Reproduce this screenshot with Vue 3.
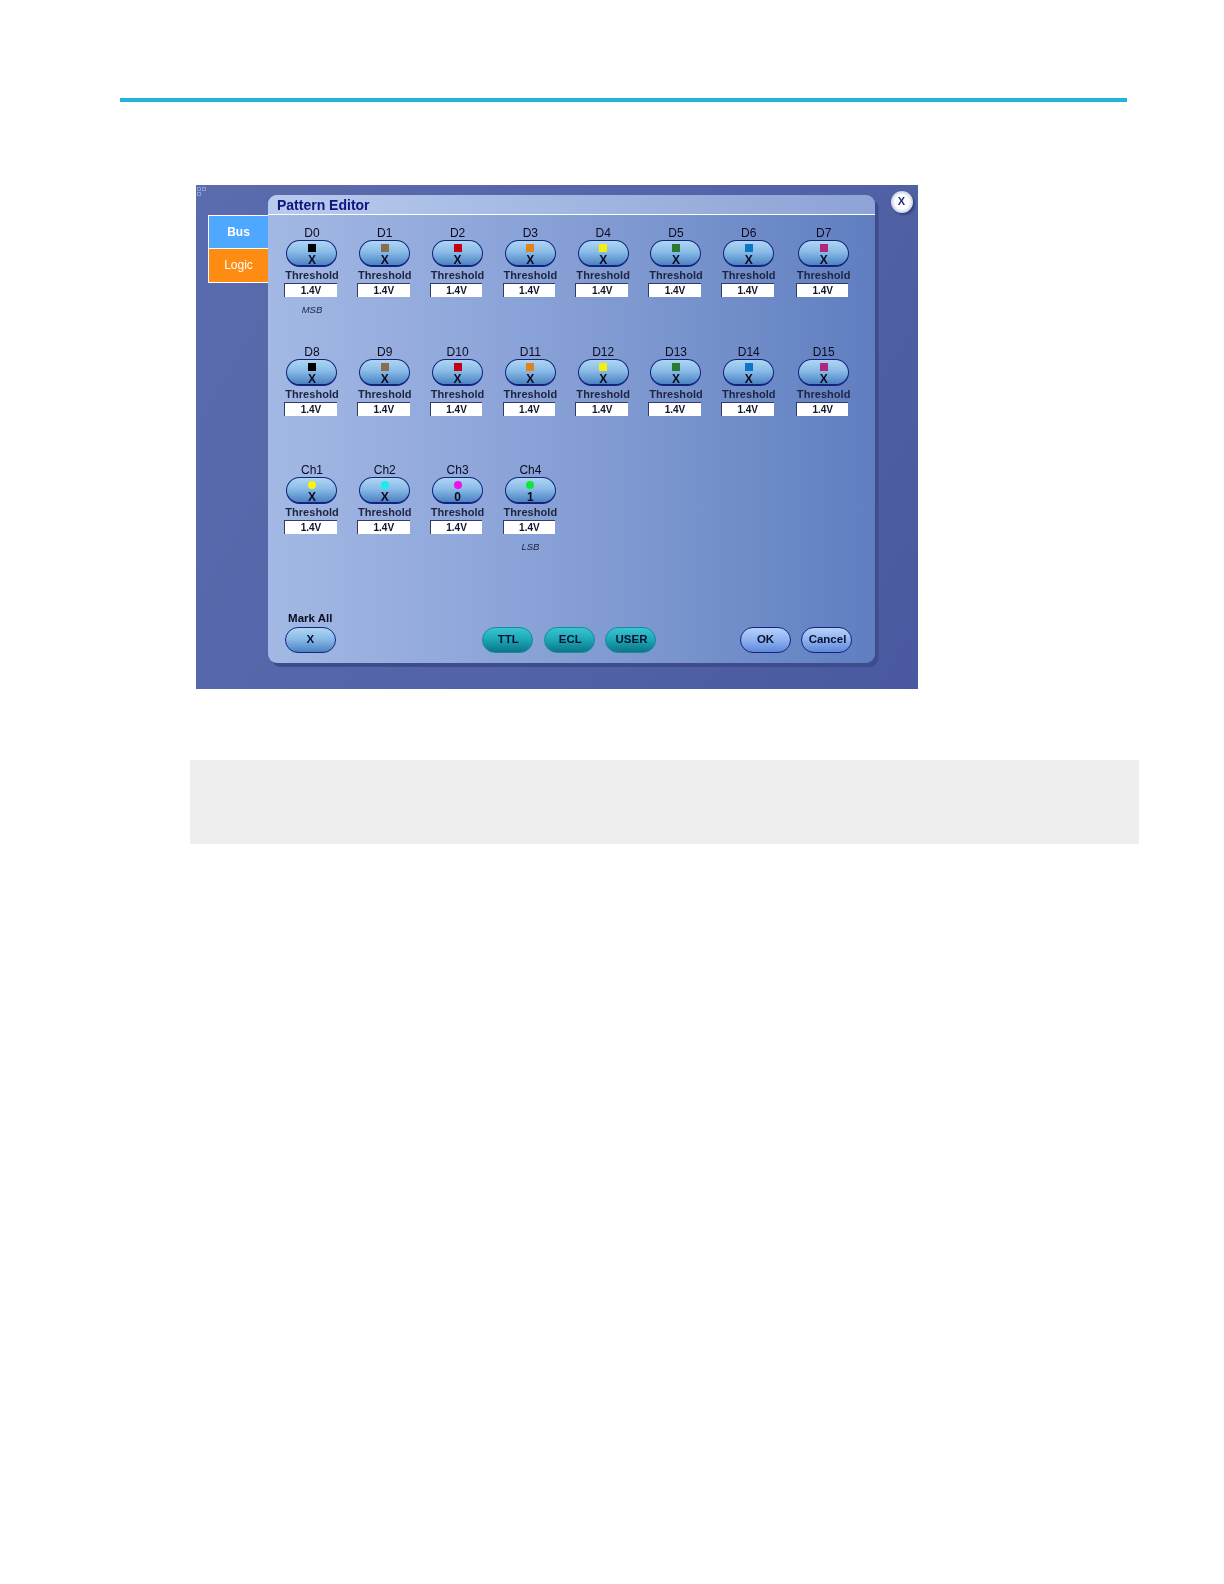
<script setup>
const colors = ['#000000', '#8a6d4a', '#c60012', '#e0821e', '#f5ee10', '#2a7a32', '#0a76c4', '#b0267a']
const digital = Array.from({ length: 16 }, (_, i) => ({
  name: 'D' + i,
  value: 'X',
  color: colors[i % 8],
  round: false,
  note: i === 0 ? 'MSB' : '',
}))
const analog = [
  { name: 'Ch1', value: 'X', color: '#f8f40a', round: true, note: '' },
  { name: 'Ch2', value: 'X', color: '#14f0f0', round: true, note: '' },
  { name: 'Ch3', value: '0', color: '#f010e8', round: true, note: '' },
  { name: 'Ch4', value: '1', color: '#10e838', round: true, note: 'LSB' },
]
const channels = [...digital, ...analog]
</script>

<template>
  <div class="page">
    <div class="rule"></div>
    <div class="shot">
      <div class="grip"><i></i><i></i><i></i></div>
      <div class="tabs">
        <div class="tab bus">Bus</div>
        <div class="tab logic">Logic</div>
      </div>
      <div class="dialog">
        <div class="title">Pattern Editor</div>
        <div class="grid">
          <div v-for="c in channels" :key="c.name" class="cell">
            <div class="name">{{ c.name }}</div>
            <div class="pill channel">
              <span class="mark" :class="{ round: c.round }" :style="{ background: c.color }"></span>
              <span class="val">{{ c.value }}</span>
            </div>
            <div class="thr">Threshold</div>
            <div class="box">1.4V</div>
            <div class="note">{{ c.note }}</div>
          </div>
        </div>
        <div class="footer">
          <div class="markall">
            <div class="ma-label">Mark All</div>
            <div class="btn blue wide">X</div>
          </div>
          <div class="btn teal ttl">TTL</div>
          <div class="btn teal ecl">ECL</div>
          <div class="btn teal user">USER</div>
          <div class="btn light ok">OK</div>
          <div class="btn light cancel">Cancel</div>
        </div>
      </div>
      <div class="close">X</div>
    </div>
    <div class="note-box"></div>
  </div>
</template>

<style>
html, body { margin: 0; background: #fff; }
</style>

<style scoped>
.page {
  width: 1224px;
  height: 1584px;
  background: #fff;
  display: flex;
  flex-direction: column;
  font-family: "Liberation Sans", Arial, sans-serif;
  overflow: hidden;
}
.rule {
  margin: 98px 0 0 120px;
  width: 1007px;
  height: 4px;
  flex: none;
  background: #22b4d8;
}
.shot {
  margin: 83px 0 0 196px;
  width: 722px;
  height: 504px;
  flex: none;
  display: flex;
  align-items: flex-start;
  position: relative;
  background: linear-gradient(120deg, #5a6cae 0%, #5365a8 50%, #4a599f 100%);
  padding-left: 12px;
  box-sizing: border-box;
  filter: blur(0.4px);
}
.grip {
  position: absolute;
  left: 1px;
  top: 2px;
  width: 10px;
  display: flex;
  flex-wrap: wrap;
  gap: 1px;
}
.grip i {
  width: 4px;
  height: 4px;
  box-sizing: border-box;
  border: 1px solid #8d9bd0;
  display: block;
}
.tabs {
  margin-top: 30px;
  width: 60px;
  flex: none;
  box-sizing: border-box;
  border: 1px solid #fff;
  border-right: none;
}
.tab {
  height: 33px;
  line-height: 32px;
  text-align: center;
  color: #fff;
  font-size: 12px;
  box-sizing: border-box;
}
.bus { background: #4ea8ff; font-weight: bold; border-bottom: 1px solid #fff; }
.logic { background: #ff8c12; }
.dialog {
  margin-top: 9.5px;
  width: 607px;
  height: 468px;
  flex: none;
  box-sizing: border-box;
  border-radius: 9px;
  background: linear-gradient(90deg, #a3b9e4 0%, #8ea6da 35%, #7d98d0 62%, #5f7ec0 100%);
  box-shadow: 3.5px 4px 0 #3e4c8c;
  display: flex;
  flex-direction: column;
}
.title {
  height: 19px;
  line-height: 20px;
  padding-left: 9px;
  border-bottom: 1px solid #fff;
  border-radius: 9px 9px 0 0;
  font-size: 14px;
  font-weight: bold;
  color: #0c1480;
  background: linear-gradient(90deg, #b8caec, #8ea3d6);
}
.grid {
  margin: 12px 0 0 7.6px;
  display: grid;
  grid-template-columns: repeat(7, 72.8px) 77px;
  grid-template-rows: 119px 118px 118px;
  height: 355px;
}
.cell {
  display: flex;
  flex-direction: column;
  align-items: center;
}
.name {
  height: 13px;
  line-height: 13px;
  font-size: 12px;
  color: #0a0a20;
}
.pill {
  width: 51px;
  height: 27px;
  flex: none;
  box-sizing: border-box;
  border: 1.5px solid #14237e;
  border-bottom-width: 2px;
  border-radius: 14px;
  background: linear-gradient(180deg, #aed6f2 0%, #8abcE8 45%, #4c82c2 100%);
  display: flex;
  flex-direction: column;
  align-items: center;
}
.mark {
  width: 8px;
  height: 8px;
  flex: none;
  margin-top: 3px;
}
.mark.round { border-radius: 50%; }
.val {
  margin-top: 2px;
  line-height: 12px;
  font-size: 12px;
  font-weight: bold;
  color: #0a0a20;
}
.thr {
  margin-top: 1px;
  height: 14px;
  line-height: 14px;
  font-size: 11px;
  font-weight: bold;
  letter-spacing: 0.05px;
  color: #1e2440;
  white-space: nowrap;
}
.box {
  margin: 1.5px 0 0 -3px;
  width: 52.5px;
  height: 14px;
  flex: none;
  box-sizing: border-box;
  background: #fff;
  border-top: 1px solid #333a66;
  border-left: 1px solid #333a66;
  line-height: 14px;
  text-align: center;
  font-size: 10px;
  font-weight: bold;
  color: #10142e;
}
.note {
  margin-top: 6.5px;
  line-height: 12px;
  font-size: 9.5px;
  font-style: italic;
  color: #1c2240;
}
.footer {
  margin-top: auto;
  padding: 0 0 10px 16.5px;
  display: flex;
  align-items: flex-end;
}
.markall {
  width: 51.5px;
  display: flex;
  flex-direction: column;
  align-items: center;
}
.ma-label {
  font-size: 11.5px;
  font-weight: bold;
  line-height: 13px;
  margin-bottom: 2px;
  color: #0a0a20;
  white-space: nowrap;
}
.btn {
  height: 25.5px;
  width: 51px;
  flex: none;
  box-sizing: border-box;
  border-radius: 13px;
  text-align: center;
  line-height: 23px;
  font-size: 11.5px;
  font-weight: bold;
  color: #0a1030;
}
.blue {
  border: 1.5px solid #14237e;
  background: linear-gradient(180deg, #aed6f2 0%, #8abce8 45%, #4c82c2 100%);
}
.wide { width: 51.5px; }
.teal {
  border: 1px solid #188a9c;
  background: linear-gradient(180deg, #38c4d2 0%, #1aa6b6 50%, #0c7686 100%);
}
.light {
  border: 1.5px solid #14237e;
  background: linear-gradient(180deg, #b6d0fa 0%, #8eb2f0 50%, #5f88d8 100%);
}
.ttl { margin-left: 146px; width: 50.5px; padding-left: 2px; }
.ecl { margin-left: 11.5px; width: 50.5px; padding-left: 2px; }
.user { margin-left: 10px; padding-left: 3px; }
.ok { margin-left: 84.5px; }
.cancel { margin-left: 9.5px; padding-left: 3px; }
.close {
  margin: 5.5px 0 0 15.5px;
  width: 22px;
  height: 22px;
  flex: none;
  border-radius: 50%;
  background: radial-gradient(circle at 50% 50%, #ffffff 45%, #c4cee4 72%, #aab6d4 100%);
  box-shadow: 2px 2px 2px #36437f;
  color: #1c2a80;
  font-size: 11px;
  font-weight: bold;
  text-align: center;
  line-height: 21px;
}
.note-box {
  margin: 71px 0 0 190px;
  width: 949px;
  height: 84px;
  flex: none;
  background: #eeeeee;
}
</style>
